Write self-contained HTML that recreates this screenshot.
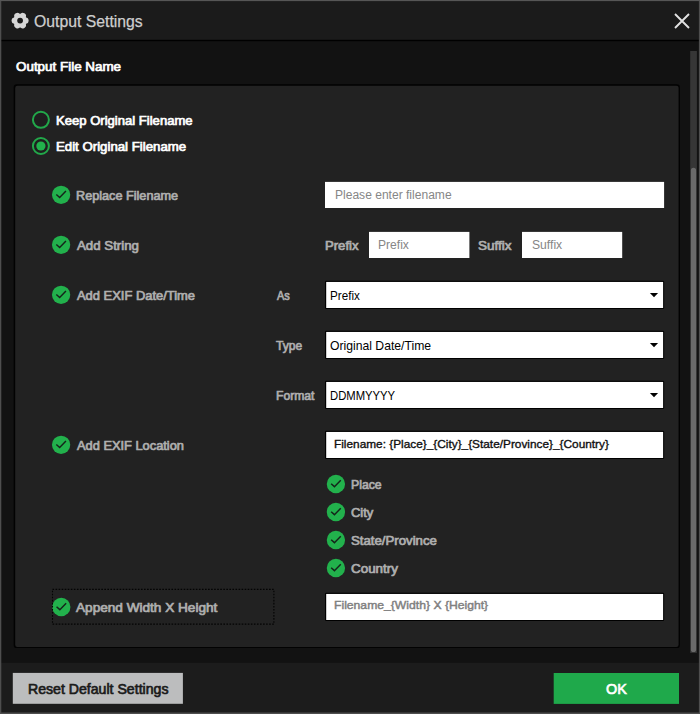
<!DOCTYPE html>
<html><head><meta charset="utf-8"><title>Output Settings</title>
<style>
html,body{margin:0;padding:0;}
body{width:700px;height:714px;overflow:hidden;background:#121212;font-family:"Liberation Sans",sans-serif;position:relative;}
#shapes{position:absolute;left:0;top:0;}
.t{position:absolute;white-space:nowrap;line-height:1;transform-origin:0 0;}
</style></head><body>
<svg id="shapes" width="700" height="714" viewBox="0 0 700 714">
<defs>
<g id="chk"><circle cx="0" cy="0" r="9.15" fill="#22b14c"/><path d="M-4.75 -0.3 L-1.45 2.65 L4.85 -3.75" fill="none" stroke="#14241a" stroke-width="1.45"/></g>
<g id="sel"><rect x="325" y="-0.3" width="339.2" height="28.4" rx="1.3" fill="#000"/><rect x="326.2" y="0.95" width="336.9" height="26.05" fill="#fff"/></g>
<path id="arr" d="M649.9 12.1 L658.1 12.1 L654 16.3 Z" fill="#000"/>
</defs>
<!-- frame -->
<rect x="0" y="0" width="700" height="40" fill="#1b1b1b"/>
<rect x="0" y="39.8" width="700" height="1.4" fill="#000"/>
<rect x="0" y="662.8" width="700" height="52" fill="#1c1c1c"/>
<!-- panel -->
<rect x="13.7" y="84.2" width="666.2" height="563.9" rx="3.2" fill="#020202"/>
<rect x="15.2" y="85.8" width="663.4" height="561.2" rx="2.2" fill="#222222"/>
<!-- gear -->
<g transform="translate(20.1 20.6)"><g fill="#d6d6d6"><circle r="6.8"/><rect x="-8.5" y="-3.2" width="17" height="6.4" rx="3.2"/><rect x="-8.5" y="-3.2" width="17" height="6.4" rx="3.2" transform="rotate(60)"/><rect x="-8.5" y="-3.2" width="17" height="6.4" rx="3.2" transform="rotate(120)"/></g><circle r="2.9" fill="#1b1b1b"/></g>
<!-- close -->
<path d="M675 14 L689 28 M689 14 L675 28" stroke="#e2e2e2" stroke-width="1.9" fill="none"/>
<!-- radios -->
<circle cx="40.9" cy="119.8" r="8" fill="#1f1f1f" stroke="#22a84a" stroke-width="2"/>
<circle cx="40.9" cy="146" r="8" fill="#1f1f1f" stroke="#22a84a" stroke-width="2"/>
<circle cx="40.9" cy="146" r="4.6" fill="#22b14c"/>
<!-- checks -->
<use href="#chk" x="61.1" y="194.8"/>
<use href="#chk" x="61.1" y="244.8"/>
<use href="#chk" x="61.1" y="294.8"/>
<use href="#chk" x="61.1" y="444.8"/>
<use href="#chk" x="61.3" y="607"/>
<use href="#chk" x="335.9" y="484"/>
<use href="#chk" x="335.9" y="512"/>
<use href="#chk" x="335.9" y="540"/>
<use href="#chk" x="335.9" y="568"/>
<!-- inputs -->
<rect x="325" y="181.9" width="339.1" height="26.1" fill="#fff"/>
<rect x="369" y="231.9" width="100.4" height="26.1" fill="#fff"/>
<rect x="522" y="231.9" width="100.2" height="26.1" fill="#fff"/>
<use href="#sel" y="281"/><use href="#arr" y="281"/>
<use href="#sel" y="331"/><use href="#arr" y="331"/>
<use href="#sel" y="381"/><use href="#arr" y="381"/>
<use href="#sel" y="431"/>
<use href="#sel" y="593"/>
<!-- focus rect -->
<rect x="52.5" y="589.4" width="221.4" height="34.7" fill="none" stroke="#030303" stroke-width="1.1" stroke-dasharray="1.6 1.45"/>
<!-- scrollbar -->
<rect x="690.2" y="51" width="6.7" height="601.9" fill="#363636"/>
<rect x="690.9" y="167.8" width="5.2" height="484.2" rx="2.6" fill="#6a6a6a"/>
<!-- buttons -->
<rect x="12.8" y="672.9" width="170.1" height="30.9" fill="#bcbdbe"/>
<rect x="553.7" y="673" width="125.3" height="30.9" fill="#1fa94b"/>
<!-- window border -->
<path d="M0 0 H700 V714 H0 Z M1.3 1.1 V712.6 H698.9 V1.1 Z" fill="#4e4e4e" fill-rule="evenodd"/><rect x="0" y="0" width="700" height="1.1" fill="#565656"/>
</svg>
<div class="t" style="left:33.64px;top:13.00px;font-size:16.2px;color:#cecece;transform:scaleX(0.9740);-webkit-text-stroke:0.25px #cecece">Output Settings</div>
<div class="t" style="left:15.88px;top:61.00px;font-size:12.0px;color:#ffffff;transform:scaleX(1.1174);-webkit-text-stroke:0.68px #ffffff">Output File Name</div>
<div class="t" style="left:55.95px;top:115.00px;font-size:12.0px;color:#ffffff;transform:scaleX(1.0892);-webkit-text-stroke:0.68px #ffffff">Keep Original Filename</div>
<div class="t" style="left:55.94px;top:141.00px;font-size:12.0px;color:#ffffff;transform:scaleX(1.1023);-webkit-text-stroke:0.68px #ffffff">Edit Original Filename</div>
<div class="t" style="left:75.88px;top:190.00px;font-size:12.0px;color:#afafaf;transform:scaleX(1.0557);-webkit-text-stroke:0.68px #afafaf">Replace Filename</div>
<div class="t" style="left:335.20px;top:189.00px;font-size:12px;color:#868686;transform:scaleX(1.0044)">Please enter filename</div>
<div class="t" style="left:76.54px;top:240.00px;font-size:12.0px;color:#afafaf;transform:scaleX(1.1062);-webkit-text-stroke:0.68px #afafaf">Add String</div>
<div class="t" style="left:324.75px;top:240.00px;font-size:12.0px;color:#afafaf;transform:scaleX(1.0922);-webkit-text-stroke:0.68px #afafaf">Prefix</div>
<div class="t" style="left:378.49px;top:239.00px;font-size:12px;color:#868686;transform:scaleX(1.0068)">Prefix</div>
<div class="t" style="left:478.38px;top:240.00px;font-size:12.0px;color:#afafaf;transform:scaleX(1.1234);-webkit-text-stroke:0.68px #afafaf">Suffix</div>
<div class="t" style="left:531.99px;top:239.00px;font-size:12px;color:#868686;transform:scaleX(1.0129)">Suffix</div>
<div class="t" style="left:76.54px;top:290.00px;font-size:12.0px;color:#afafaf;transform:scaleX(1.0772);-webkit-text-stroke:0.68px #afafaf">Add EXIF Date/Time</div>
<div class="t" style="left:276.64px;top:290.00px;font-size:12.0px;color:#afafaf;transform:scaleX(0.9116);-webkit-text-stroke:0.68px #afafaf">As</div>
<div class="t" style="left:329.67px;top:290.00px;font-size:12.6px;color:#000000;transform:scaleX(0.9258)">Prefix</div>
<div class="t" style="left:276.39px;top:340.00px;font-size:12.0px;color:#afafaf;transform:scaleX(1.0028);-webkit-text-stroke:0.68px #afafaf">Type</div>
<div class="t" style="left:330.00px;top:340.00px;font-size:12.6px;color:#000000;transform:scaleX(0.9674)">Original Date/Time</div>
<div class="t" style="left:275.93px;top:390.00px;font-size:12.0px;color:#afafaf;transform:scaleX(1.0121);-webkit-text-stroke:0.68px #afafaf">Format</div>
<div class="t" style="left:329.70px;top:390.00px;font-size:12.6px;color:#000000;transform:scaleX(0.8951)">DDMMYYYY</div>
<div class="t" style="left:76.54px;top:440.00px;font-size:12.0px;color:#afafaf;transform:scaleX(1.0692);-webkit-text-stroke:0.68px #afafaf">Add EXIF Location</div>
<div class="t" style="left:333.55px;top:438.00px;font-size:11.6px;color:#101010;transform:scaleX(1.0204);-webkit-text-stroke:0.35px #101010">Filename: {Place}_{City}_{State/Province}_{Country}</div>
<div class="t" style="left:351.02px;top:479.00px;font-size:12.0px;color:#afafaf;transform:scaleX(1.0218);-webkit-text-stroke:0.68px #afafaf">Place</div>
<div class="t" style="left:350.66px;top:507.00px;font-size:12.0px;color:#afafaf;transform:scaleX(1.0810);-webkit-text-stroke:0.68px #afafaf">City</div>
<div class="t" style="left:350.79px;top:535.00px;font-size:12.0px;color:#afafaf;transform:scaleX(1.1003);-webkit-text-stroke:0.68px #afafaf">State/Province</div>
<div class="t" style="left:350.64px;top:563.00px;font-size:12.0px;color:#afafaf;transform:scaleX(1.1171);-webkit-text-stroke:0.68px #afafaf">Country</div>
<div class="t" style="left:75.94px;top:602.00px;font-size:12.0px;color:#afafaf;transform:scaleX(1.1332);-webkit-text-stroke:0.68px #afafaf">Append Width X Height</div>
<div class="t" style="left:333.58px;top:599.00px;font-size:11.6px;color:#808080;transform:scaleX(1.0492);-webkit-text-stroke:0.45px #808080">Filename_{Width} X {Height}</div>
<div class="t" style="left:27.82px;top:682.00px;font-size:14.2px;color:#1a1a1a;transform:scaleX(0.9950);-webkit-text-stroke:0.68px #1a1a1a">Reset Default Settings</div>
<div class="t" style="left:605.93px;top:681.00px;font-size:15.2px;color:#ffffff;transform:scaleX(0.9486);-webkit-text-stroke:0.68px #ffffff">OK</div>
</body></html>
